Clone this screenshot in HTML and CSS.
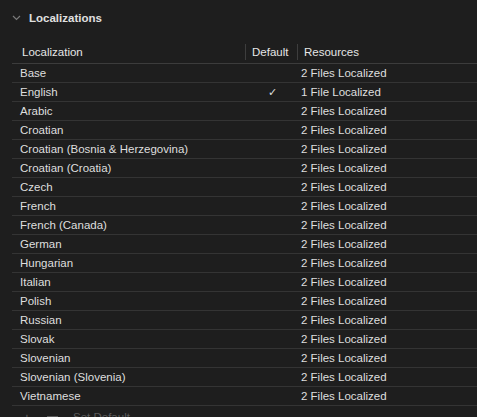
FILE: index.html
```html
<!DOCTYPE html>
<html>
<head>
<meta charset="utf-8">
<link rel="stylesheet" href="styles.css">
</head>
<body>
<div class="panel">
  <div class="section-head">
    <svg class="chev" width="9" height="6" viewBox="0 0 9 6"><path d="M1 1 L4.5 4.5 L8 1" fill="none" stroke="#7a7a7a" stroke-width="1.2"/></svg>
    <span class="title">Localizations</span>
  </div>
  <div class="table">
    <div class="row header">
      <div class="c1">Localization</div>
      <div class="c2"><span class="sep"></span>Default</div>
      <div class="c3"><span class="sep"></span>Resources</div>
    </div>
    <div class="row"><div class="c1">Base</div><div class="c2"></div><div class="c3">2 Files Localized</div></div>
    <div class="row"><div class="c1">English</div><div class="c2 check">✓</div><div class="c3">1 File Localized</div></div>
    <div class="row"><div class="c1">Arabic</div><div class="c2"></div><div class="c3">2 Files Localized</div></div>
    <div class="row"><div class="c1">Croatian</div><div class="c2"></div><div class="c3">2 Files Localized</div></div>
    <div class="row"><div class="c1">Croatian (Bosnia &amp; Herzegovina)</div><div class="c2"></div><div class="c3">2 Files Localized</div></div>
    <div class="row"><div class="c1">Croatian (Croatia)</div><div class="c2"></div><div class="c3">2 Files Localized</div></div>
    <div class="row"><div class="c1">Czech</div><div class="c2"></div><div class="c3">2 Files Localized</div></div>
    <div class="row"><div class="c1">French</div><div class="c2"></div><div class="c3">2 Files Localized</div></div>
    <div class="row"><div class="c1">French (Canada)</div><div class="c2"></div><div class="c3">2 Files Localized</div></div>
    <div class="row"><div class="c1">German</div><div class="c2"></div><div class="c3">2 Files Localized</div></div>
    <div class="row"><div class="c1">Hungarian</div><div class="c2"></div><div class="c3">2 Files Localized</div></div>
    <div class="row"><div class="c1">Italian</div><div class="c2"></div><div class="c3">2 Files Localized</div></div>
    <div class="row"><div class="c1">Polish</div><div class="c2"></div><div class="c3">2 Files Localized</div></div>
    <div class="row"><div class="c1">Russian</div><div class="c2"></div><div class="c3">2 Files Localized</div></div>
    <div class="row"><div class="c1">Slovak</div><div class="c2"></div><div class="c3">2 Files Localized</div></div>
    <div class="row"><div class="c1">Slovenian</div><div class="c2"></div><div class="c3">2 Files Localized</div></div>
    <div class="row"><div class="c1">Slovenian (Slovenia)</div><div class="c2"></div><div class="c3">2 Files Localized</div></div>
    <div class="row"><div class="c1">Vietnamese</div><div class="c2"></div><div class="c3">2 Files Localized</div></div>
  </div>
  <div class="toolbar">
    <span class="plus">+</span>
    <span class="minus"></span>
    <span class="setdef">Set Default</span>
  </div>
</div>
</body>
</html>
```
FILE: styles.css
```css
html, body {
  margin: 0;
  padding: 0;
  background: #1e1e1e;
  height: 100%;
  overflow: hidden;
}
.panel {
  font-family: "Liberation Sans", Arial, sans-serif;
  font-size: 11.5px;
  color: #dedede;
  padding-top: 9px;
}
.section-head {
  display: flex;
  align-items: center;
  height: 17px;
  padding-left: 12px;
}
.chev {
  margin-right: 8px;
}
.title {
  font-weight: bold;
  color: #e0e0e0;
  font-size: 11.5px;
}
.table {
  margin-top: 14px;
  margin-left: 12px;
}
.row {
  display: flex;
  height: 18px;
  align-items: center;
  border-bottom: 1px solid #343434;
}
.row.header {
  height: 23px;
  border-bottom: 1px solid #3c3c3c;
  color: #e6e6e6;
}
.c1 {
  width: 233px;
  padding-left: 8px;
  box-sizing: border-box;
  white-space: nowrap;
}
.header .c1 {
  padding-left: 10px;
}
.c2 {
  width: 52px;
  display: flex;
  align-items: center;
  box-sizing: border-box;
}
.header .c2 {
  padding-left: 7px;
}
.c3 {
  flex: 1;
  display: flex;
  align-items: center;
  padding-left: 4px;
  white-space: nowrap;
}
.header .c3 {
  padding-left: 0;
}
.sep {
  display: inline-block;
  width: 1px;
  height: 16px;
  background: #3e3e3e;
  margin-right: 6px;
}
.header .c2 .sep {
  margin-left: -7px;
  margin-right: 6px;
}
.check {
  padding-left: 23px;
  font-size: 11px;
  font-family: "DejaVu Sans", sans-serif;
}
.toolbar {
  display: flex;
  align-items: center;
  height: 16px;
  padding-left: 21px;
  margin-top: 3px;
  color: #5a5a5a;
}
.plus {
  font-size: 15px;
  width: 12px;
  text-align: center;
}
.minus {
  display: inline-block;
  width: 11px;
  height: 1.5px;
  background: #5a5a5a;
  margin-left: 14px;
}
.setdef {
  margin-left: 15px;
  font-size: 11.5px;
}
```
